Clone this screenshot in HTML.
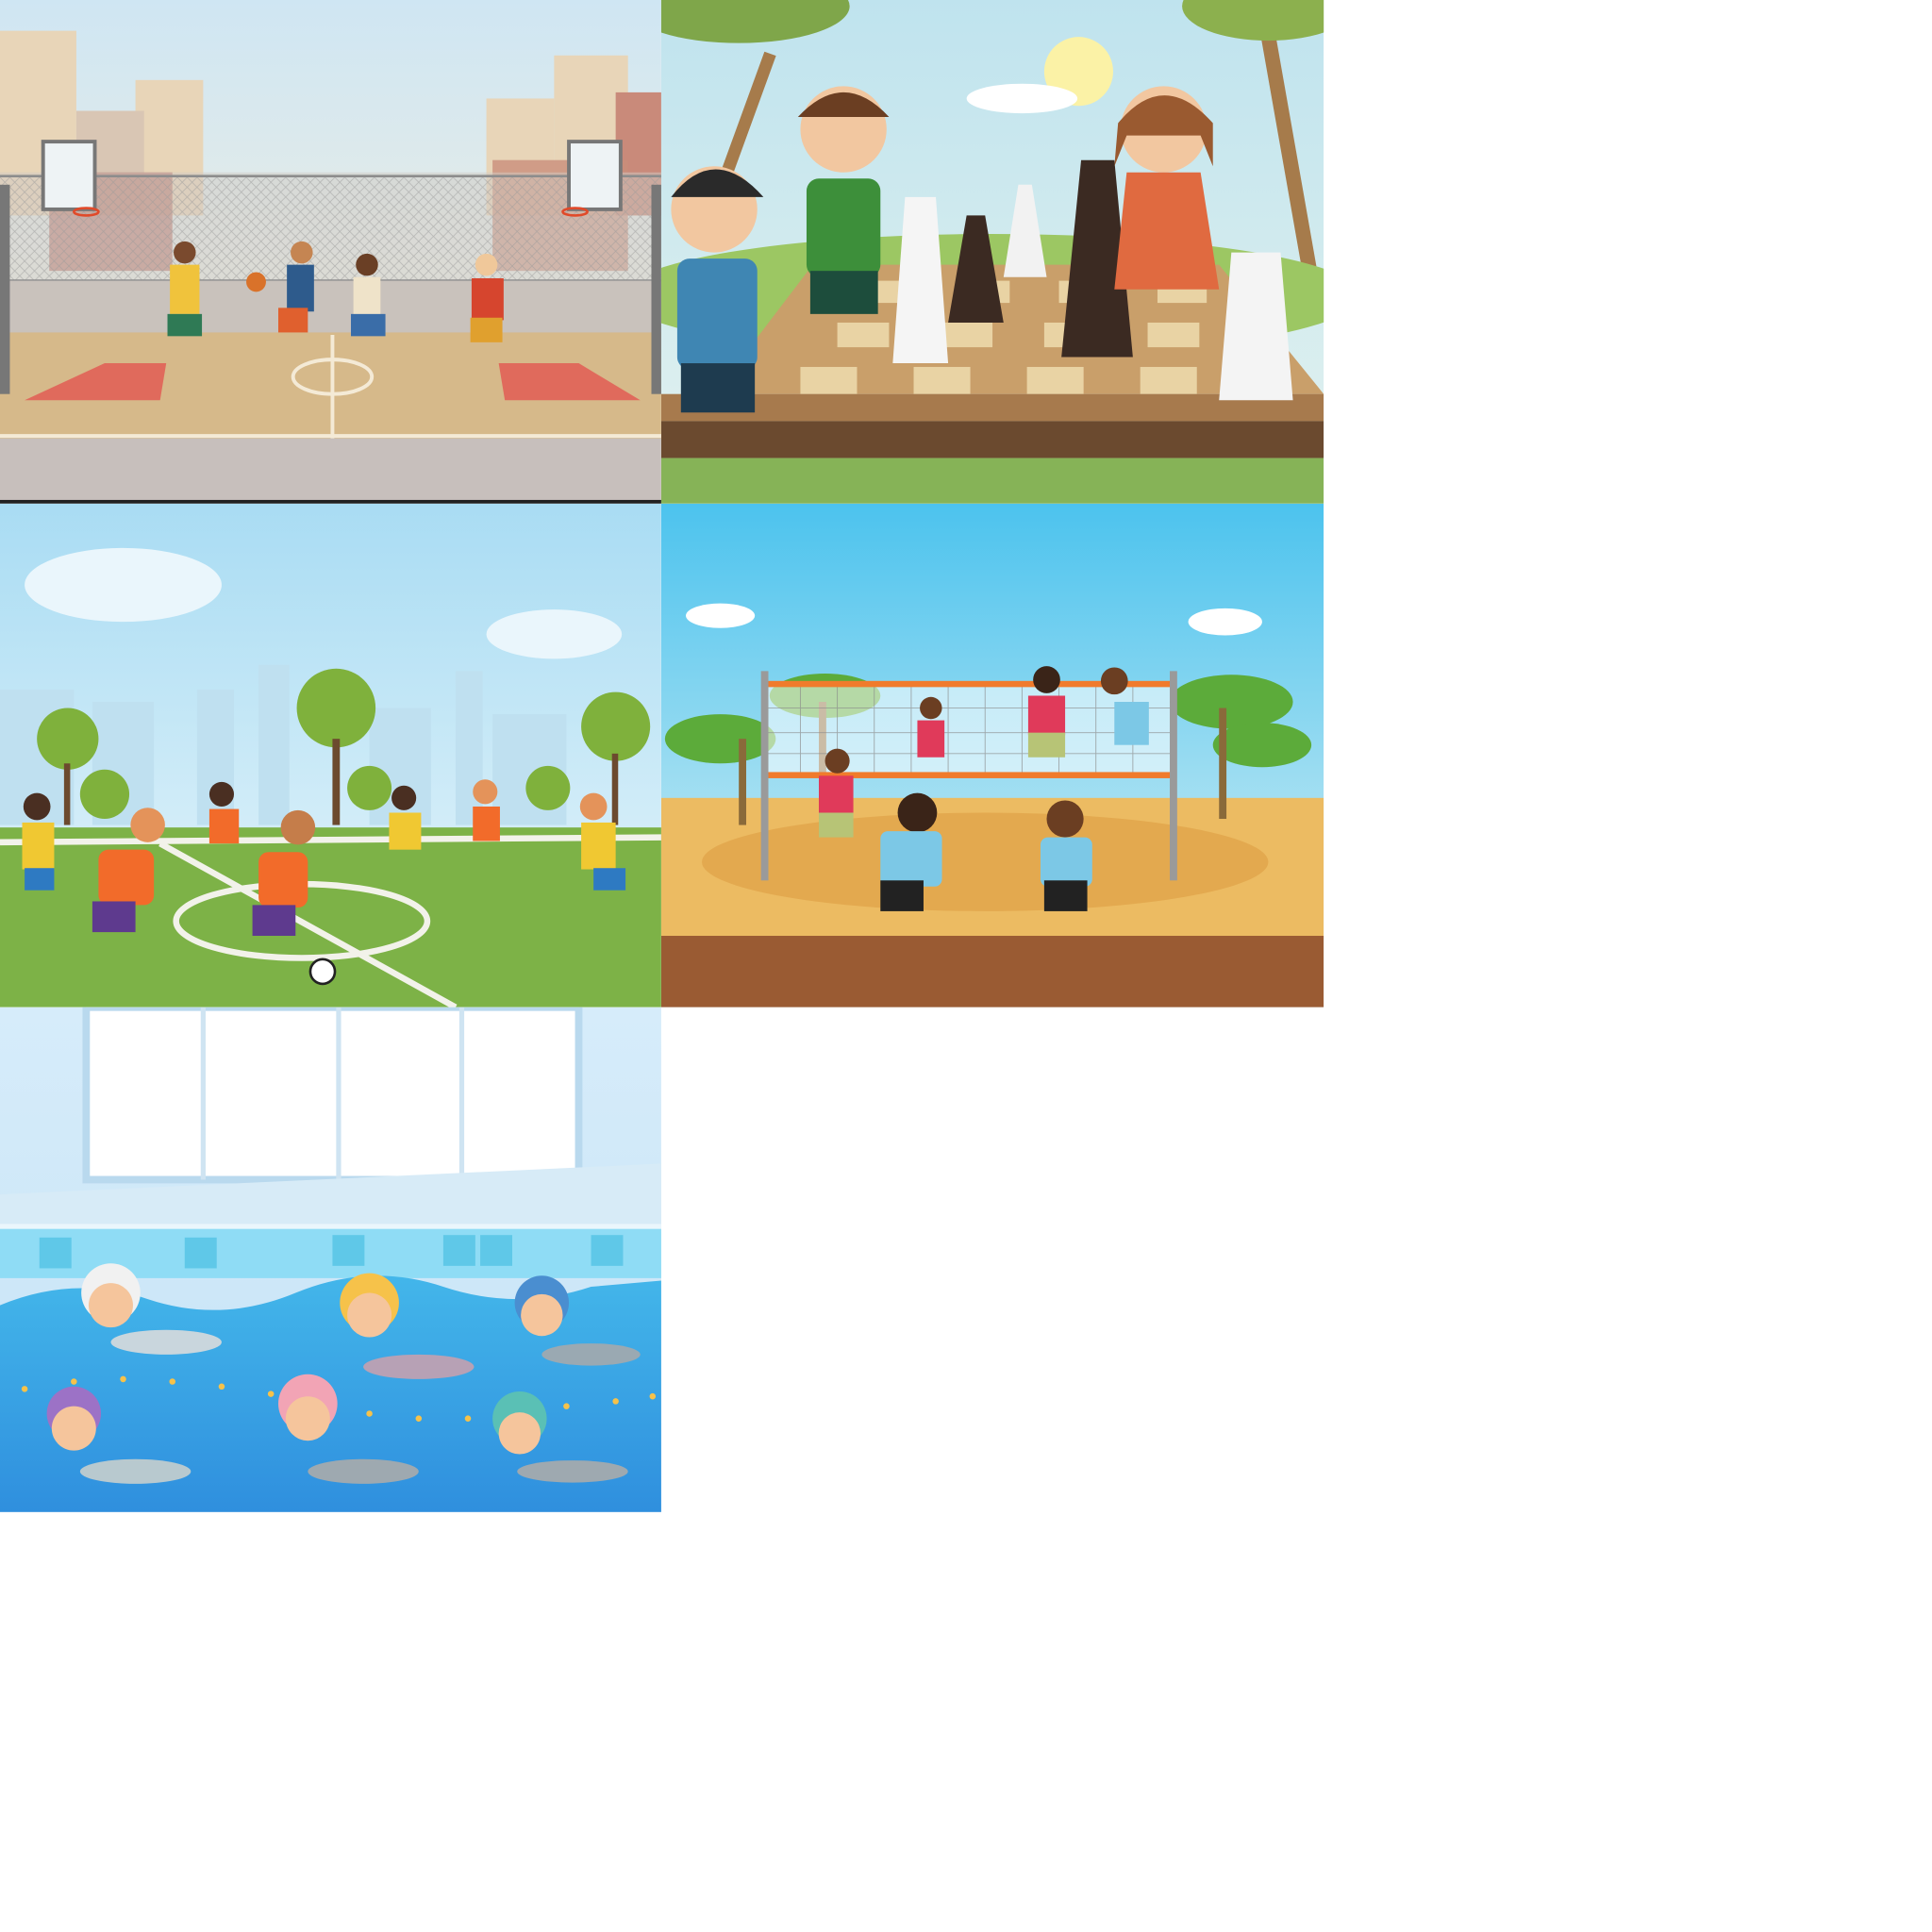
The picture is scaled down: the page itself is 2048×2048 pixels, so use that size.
<!DOCTYPE html>
<html><head><meta charset="utf-8"><style>
html,body{margin:0;padding:0;background:#fff;width:2048px;height:2048px;overflow:hidden}
svg{display:block}
</style></head><body>
<svg width="2048" height="2048" viewBox="0 0 1569 1569" xmlns="http://www.w3.org/2000/svg">
<defs>
<linearGradient id="bsky" x1="0" y1="0" x2="0" y2="1"><stop offset="0" stop-color="#cfe6f3"/><stop offset="1" stop-color="#fbf1dc"/></linearGradient>
<linearGradient id="csky" x1="0" y1="0" x2="0" y2="1"><stop offset="0" stop-color="#bfe3ee"/><stop offset="1" stop-color="#e3f2ef"/></linearGradient>
<linearGradient id="ssky" x1="0" y1="0" x2="0" y2="1"><stop offset="0" stop-color="#a9dcf3"/><stop offset="1" stop-color="#e9f6fb"/></linearGradient>
<linearGradient id="vsky" x1="0" y1="0" x2="0" y2="1"><stop offset="0" stop-color="#4cc3ee"/><stop offset="1" stop-color="#dff2f4"/></linearGradient>
<linearGradient id="water" x1="0" y1="0" x2="0" y2="1"><stop offset="0" stop-color="#43b6ea"/><stop offset="1" stop-color="#2f8fde"/></linearGradient>
<linearGradient id="pwall" x1="0" y1="0" x2="0" y2="1"><stop offset="0" stop-color="#d6ecfa"/><stop offset="1" stop-color="#c6e3f6"/></linearGradient>
<clipPath id="c1"><rect x="0" y="0" width="537" height="409"/></clipPath>
<clipPath id="c2"><rect x="537" y="0" width="538" height="409"/></clipPath>
<clipPath id="c3"><rect x="0" y="409" width="537" height="409"/></clipPath>
<clipPath id="c4"><rect x="537" y="409" width="538" height="409"/></clipPath>
<clipPath id="c5"><rect x="0" y="818" width="537" height="410"/></clipPath>
<pattern id="fence" width="8" height="8" patternUnits="userSpaceOnUse"><path d="M0,0 L8,8 M8,0 L0,8" stroke="#9a9a9a" stroke-width="0.6"/></pattern>
</defs>

<!-- Panel 1 basketball -->
<g clip-path="url(#c1)">
<rect x="0" y="0" width="537" height="409" fill="url(#bsky)"/>
<g fill="#e8d5b8">
<rect x="0" y="25" width="62" height="150"/><rect x="110" y="65" width="55" height="110"/><rect x="62" y="90" width="55" height="85" fill="#d9c6b4"/>
<rect x="395" y="80" width="55" height="95"/><rect x="450" y="45" width="60" height="130"/><rect x="500" y="75" width="37" height="100" fill="#c98a7a"/>
</g>
<rect x="40" y="140" width="100" height="80" fill="#b9766a" opacity="0.8"/>
<rect x="400" y="130" width="110" height="90" fill="#c98d7a" opacity="0.8"/>
<rect x="0" y="140" width="537" height="90" fill="#cfcac4" opacity="0.5"/>
<rect x="0" y="143" width="537" height="85" fill="url(#fence)" opacity="0.6"/>
<g stroke="#8d8d8d" stroke-width="2"><line x1="0" y1="143" x2="537" y2="143"/><line x1="0" y1="228" x2="537" y2="228"/></g>
<rect x="0" y="228" width="537" height="45" fill="#c9c2bc"/>
<rect x="0" y="270" width="537" height="86" fill="#d6b98a"/>
<polygon points="20,325 85,295 135,295 130,325" fill="#e06a5c"/>
<polygon points="405,295 470,295 520,325 410,325" fill="#e06a5c"/>
<g fill="none" stroke="#f4ead6" stroke-width="3"><line x1="270" y1="272" x2="270" y2="356"/><ellipse cx="270" cy="306" rx="32" ry="14"/><line x1="0" y1="354" x2="537" y2="354"/></g>
<rect x="0" y="356" width="537" height="53" fill="#c7bfbc"/>
<rect x="0" y="406" width="537" height="3" fill="#222"/>
<rect x="35" y="115" width="42" height="55" fill="#eef3f5" stroke="#777" stroke-width="3"/>
<rect x="462" y="115" width="42" height="55" fill="#eef3f5" stroke="#777" stroke-width="3"/>
<ellipse cx="70" cy="172" rx="10" ry="3" fill="none" stroke="#e04a2a" stroke-width="2"/>
<ellipse cx="467" cy="172" rx="10" ry="3" fill="none" stroke="#e04a2a" stroke-width="2"/>
<rect x="0" y="150" width="8" height="170" fill="#777"/><rect x="529" y="150" width="8" height="170" fill="#777"/>
<circle cx="150" cy="205" r="9" fill="#7a4a2e"/><rect x="138" y="215" width="24" height="40" fill="#f0c33c"/><rect x="136" y="255" width="28" height="18" fill="#2f7a55"/>
<circle cx="245" cy="205" r="9" fill="#c58552"/><rect x="233" y="215" width="22" height="38" fill="#2e5b8c"/><rect x="226" y="250" width="24" height="20" fill="#e0602e"/><circle cx="208" cy="229" r="8" fill="#d9722a"/>
<circle cx="298" cy="215" r="9" fill="#6a3f25"/><rect x="287" y="225" width="22" height="32" fill="#efe3c9"/><rect x="285" y="255" width="28" height="18" fill="#3a6da8"/>
<circle cx="395" cy="215" r="9" fill="#f0c89a"/><rect x="383" y="226" width="26" height="34" fill="#d6452e"/><rect x="382" y="258" width="26" height="20" fill="#e0a02e"/>
</g>

<!-- Panel 2 chess -->
<g clip-path="url(#c2)">
<rect x="537" y="0" width="538" height="409" fill="url(#csky)"/>
<circle cx="876" cy="58" r="28" fill="#fbf2a6"/>
<ellipse cx="830" cy="80" rx="45" ry="12" fill="#fff"/>
<rect x="600" y="40" width="10" height="130" fill="#a67b4b" transform="rotate(20 605 100)"/>
<rect x="1040" y="30" width="12" height="190" fill="#a67b4b" transform="rotate(-10 1046 120)"/>
<ellipse cx="600" cy="5" rx="90" ry="30" fill="#7fa64a"/><ellipse cx="1030" cy="5" rx="70" ry="28" fill="#8cb04e"/>
<ellipse cx="805" cy="240" rx="300" ry="50" fill="#9cc763"/>
<polygon points="660,215 990,215 1075,320 580,320" fill="#c99f6a"/>
<g fill="#e9d3a4">
<rect x="700" y="228" width="40" height="18"/><rect x="780" y="228" width="40" height="18"/><rect x="860" y="228" width="40" height="18"/><rect x="940" y="228" width="40" height="18"/>
<rect x="680" y="262" width="42" height="20"/><rect x="764" y="262" width="42" height="20"/><rect x="848" y="262" width="42" height="20"/><rect x="932" y="262" width="42" height="20"/>
<rect x="650" y="298" width="46" height="22"/><rect x="742" y="298" width="46" height="22"/><rect x="834" y="298" width="46" height="22"/><rect x="926" y="298" width="46" height="22"/>
</g>
<rect x="537" y="320" width="538" height="22" fill="#a77a4d"/>
<rect x="537" y="342" width="538" height="30" fill="#6b4a2f"/>
<rect x="537" y="372" width="538" height="37" fill="#86b357"/>
<polygon points="725,295 770,295 760,160 735,160" fill="#f5f5f5"/>
<polygon points="770,262 815,262 800,175 785,175" fill="#3b2a22"/>
<polygon points="815,225 850,225 838,150 827,150" fill="#f2f2f2"/>
<polygon points="862,290 920,290 905,130 878,130" fill="#3b2a22"/>
<polygon points="990,325 1050,325 1040,205 1000,205" fill="#f4f4f4"/>
<circle cx="580" cy="170" r="35" fill="#f2c7a0"/><path d="M545,160 Q580,115 620,160 Z" fill="#2a2a2a"/>
<rect x="550" y="210" width="65" height="90" rx="10" fill="#3f86b3"/><rect x="553" y="295" width="60" height="40" fill="#1e3b4f"/>
<circle cx="685" cy="105" r="35" fill="#f2c7a0"/><path d="M648,95 Q685,55 722,95 Z" fill="#6b3e22"/>
<rect x="655" y="145" width="60" height="80" rx="10" fill="#3d8f3a"/><rect x="658" y="220" width="55" height="35" fill="#1d4d3c"/>
<circle cx="945" cy="105" r="35" fill="#f2c7a0"/><path d="M908,100 Q945,55 985,100 L985,135 L975,110 L915,110 L905,135 Z" fill="#9a5a30"/>
<polygon points="915,140 975,140 990,235 905,235" fill="#e06a40"/>
</g>

<!-- Panel 3 soccer -->
<g clip-path="url(#c3)">
<rect x="0" y="409" width="537" height="409" fill="url(#ssky)"/>
<ellipse cx="100" cy="475" rx="80" ry="30" fill="#eaf6fc"/><ellipse cx="450" cy="515" rx="55" ry="20" fill="#eaf6fc"/>
<g fill="#bfe0f0"><rect x="0" y="560" width="60" height="110"/><rect x="75" y="570" width="50" height="100"/><rect x="160" y="560" width="30" height="110"/><rect x="210" y="540" width="25" height="130"/><rect x="300" y="575" width="50" height="95"/><rect x="370" y="545" width="22" height="125"/><rect x="400" y="580" width="60" height="90"/></g>
<rect x="0" y="672" width="537" height="146" fill="#7db247"/>
<g fill="none" stroke="#f2f2ea" stroke-width="5"><ellipse cx="245" cy="748" rx="102" ry="30"/><line x1="130" y1="685" x2="370" y2="818"/><line x1="0" y1="684" x2="537" y2="680"/></g>
<g fill="#7fb13c"><circle cx="55" cy="600" r="25"/><circle cx="273" cy="575" r="32"/><circle cx="500" cy="590" r="28"/><circle cx="85" cy="645" r="20"/><circle cx="300" cy="640" r="18"/><circle cx="445" cy="640" r="18"/></g>
<g fill="#6c4a2e"><rect x="52" y="620" width="5" height="50"/><rect x="270" y="600" width="6" height="70"/><rect x="497" y="612" width="5" height="58"/></g>
<circle cx="30" cy="655" r="11" fill="#4a2f22"/><rect x="18" y="668" width="26" height="38" fill="#f0c832"/><rect x="20" y="705" width="24" height="18" fill="#2e7ac2"/>
<circle cx="120" cy="670" r="14" fill="#e4935a"/><rect x="80" y="690" width="45" height="45" rx="8" fill="#f26b2a"/><rect x="75" y="732" width="35" height="25" fill="#5e3a8e"/>
<circle cx="242" cy="672" r="14" fill="#c57d4a"/><rect x="210" y="692" width="40" height="45" rx="8" fill="#f26b2a"/><rect x="205" y="735" width="35" height="25" fill="#5e3a8e"/>
<circle cx="180" cy="645" r="10" fill="#4a2f22"/><rect x="170" y="657" width="24" height="28" fill="#f26b2a"/>
<circle cx="328" cy="648" r="10" fill="#4a2f22"/><rect x="316" y="660" width="26" height="30" fill="#f0c832"/>
<circle cx="394" cy="643" r="10" fill="#e4935a"/><rect x="384" y="655" width="22" height="28" fill="#f26b2a"/>
<circle cx="482" cy="655" r="11" fill="#e4935a"/><rect x="472" y="668" width="28" height="38" fill="#f0c832"/><rect x="482" y="705" width="26" height="18" fill="#2e7ac2"/>
<circle cx="262" cy="789" r="10" fill="#fff" stroke="#222" stroke-width="2"/>
</g>

<!-- Panel 4 volleyball -->
<g clip-path="url(#c4)">
<rect x="537" y="409" width="538" height="409" fill="url(#vsky)"/>
<ellipse cx="585" cy="500" rx="28" ry="10" fill="#fff"/><ellipse cx="995" cy="505" rx="30" ry="11" fill="#fff"/>
<rect x="537" y="648" width="538" height="115" fill="#ecbb62"/>
<ellipse cx="800" cy="700" rx="230" ry="40" fill="#e3a94f"/>
<rect x="537" y="760" width="538" height="58" fill="#9a5b33"/>
<g fill="#5cab3a"><ellipse cx="585" cy="600" rx="45" ry="20"/><ellipse cx="670" cy="565" rx="45" ry="18"/><ellipse cx="1000" cy="570" rx="50" ry="22"/><ellipse cx="1025" cy="605" rx="40" ry="18"/></g>
<g fill="#8a6a3a"><rect x="600" y="600" width="6" height="70"/><rect x="665" y="570" width="6" height="95"/><rect x="990" y="575" width="6" height="90"/></g>
<rect x="618" y="545" width="6" height="170" fill="#9a9a9a"/><rect x="950" y="545" width="6" height="170" fill="#9a9a9a"/>
<rect x="624" y="555" width="326" height="75" fill="#ffffff" opacity="0.55"/>
<g stroke="#8a8a8a" stroke-width="0.7" opacity="0.7">
<line x1="650" y1="555" x2="650" y2="630"/><line x1="680" y1="555" x2="680" y2="630"/><line x1="710" y1="555" x2="710" y2="630"/><line x1="740" y1="555" x2="740" y2="630"/><line x1="770" y1="555" x2="770" y2="630"/><line x1="800" y1="555" x2="800" y2="630"/><line x1="830" y1="555" x2="830" y2="630"/><line x1="860" y1="555" x2="860" y2="630"/><line x1="890" y1="555" x2="890" y2="630"/><line x1="920" y1="555" x2="920" y2="630"/>
<line x1="624" y1="575" x2="950" y2="575"/><line x1="624" y1="595" x2="950" y2="595"/><line x1="624" y1="612" x2="950" y2="612"/></g>
<rect x="624" y="553" width="326" height="5" fill="#f07b2c"/><rect x="624" y="627" width="326" height="5" fill="#f07b2c"/>
<rect x="665" y="630" width="28" height="30" fill="#e03a5a"/><circle cx="680" cy="618" r="10" fill="#6b3e22"/><rect x="665" y="660" width="28" height="20" fill="#b7c476"/>
<rect x="745" y="585" width="22" height="30" fill="#e03a5a"/><circle cx="756" cy="575" r="9" fill="#6b3e22"/>
<rect x="835" y="565" width="30" height="32" fill="#e03a5a"/><circle cx="850" cy="552" r="11" fill="#3a2418"/><rect x="835" y="595" width="30" height="20" fill="#b7c476"/>
<rect x="905" y="570" width="28" height="35" fill="#7cc8e6"/><circle cx="905" cy="553" r="11" fill="#6b3e22"/>
<circle cx="745" cy="660" r="16" fill="#3a2418"/><rect x="715" y="675" width="50" height="45" rx="6" fill="#7cc8e6"/><rect x="715" y="715" width="35" height="25" fill="#222"/>
<circle cx="865" cy="665" r="15" fill="#6b3e22"/><rect x="845" y="680" width="42" height="40" rx="6" fill="#7cc8e6"/><rect x="848" y="715" width="35" height="25" fill="#222"/>
</g>

<!-- Panel 5 swimming -->
<g clip-path="url(#c5)">
<rect x="0" y="818" width="537" height="410" fill="url(#pwall)"/>
<rect x="70" y="818" width="400" height="140" fill="#ffffff" stroke="#b9d9ee" stroke-width="6"/>
<g stroke="#cfe4f2" stroke-width="4"><line x1="165" y1="818" x2="165" y2="958"/><line x1="275" y1="818" x2="275" y2="958"/><line x1="375" y1="818" x2="375" y2="958"/></g>
<polygon points="0,970 537,945 537,1000 0,1000" fill="#d7ebf7"/>
<rect x="0" y="994" width="537" height="6" fill="#eaf6fc"/>
<rect x="0" y="998" width="537" height="40" fill="#8fdcf5"/>
<g fill="#5fc8e8"><rect x="32" y="1005" width="26" height="25"/><rect x="150" y="1005" width="26" height="25"/><rect x="270" y="1003" width="26" height="25"/><rect x="360" y="1003" width="26" height="25"/><rect x="390" y="1003" width="26" height="25"/><rect x="480" y="1003" width="26" height="25"/></g>
<path d="M0,1060 Q60,1035 120,1055 T240,1050 T360,1045 T480,1045 L537,1040 L537,1228 L0,1228 Z" fill="url(#water)"/>
<g fill="#f6c24a"><circle cx="20" cy="1128" r="2.5"/><circle cx="60" cy="1122" r="2.5"/><circle cx="100" cy="1120" r="2.5"/><circle cx="140" cy="1122" r="2.5"/><circle cx="180" cy="1126" r="2.5"/><circle cx="220" cy="1132" r="2.5"/><circle cx="260" cy="1140" r="2.5"/><circle cx="300" cy="1148" r="2.5"/><circle cx="340" cy="1152" r="2.5"/><circle cx="380" cy="1152" r="2.5"/><circle cx="420" cy="1148" r="2.5"/><circle cx="460" cy="1142" r="2.5"/><circle cx="500" cy="1138" r="2.5"/><circle cx="530" cy="1134" r="2.5"/></g>
<circle cx="90" cy="1050" r="24" fill="#f1f1f1"/><circle cx="90" cy="1060" r="18" fill="#f5c59c"/><ellipse cx="135" cy="1090" rx="45" ry="10" fill="#c9d6dd"/>
<circle cx="300" cy="1058" r="24" fill="#f6c24a"/><circle cx="300" cy="1068" r="18" fill="#f5c59c"/><ellipse cx="340" cy="1110" rx="45" ry="10" fill="#b7a1b5"/>
<circle cx="440" cy="1058" r="22" fill="#4a8ed0"/><circle cx="440" cy="1068" r="17" fill="#f5c59c"/><ellipse cx="480" cy="1100" rx="40" ry="9" fill="#9aa9b2"/>
<circle cx="60" cy="1148" r="22" fill="#9c72c6"/><circle cx="60" cy="1160" r="18" fill="#f5c59c"/><ellipse cx="110" cy="1195" rx="45" ry="10" fill="#b8c9cf"/>
<circle cx="250" cy="1140" r="24" fill="#f2a4b5"/><circle cx="250" cy="1152" r="18" fill="#f5c59c"/><ellipse cx="295" cy="1195" rx="45" ry="10" fill="#9ea9b0"/>
<circle cx="422" cy="1152" r="22" fill="#5ac0b5"/><circle cx="422" cy="1164" r="17" fill="#f5c59c"/><ellipse cx="465" cy="1195" rx="45" ry="9" fill="#9ea9b0"/>
</g>
</svg>
</body></html>
